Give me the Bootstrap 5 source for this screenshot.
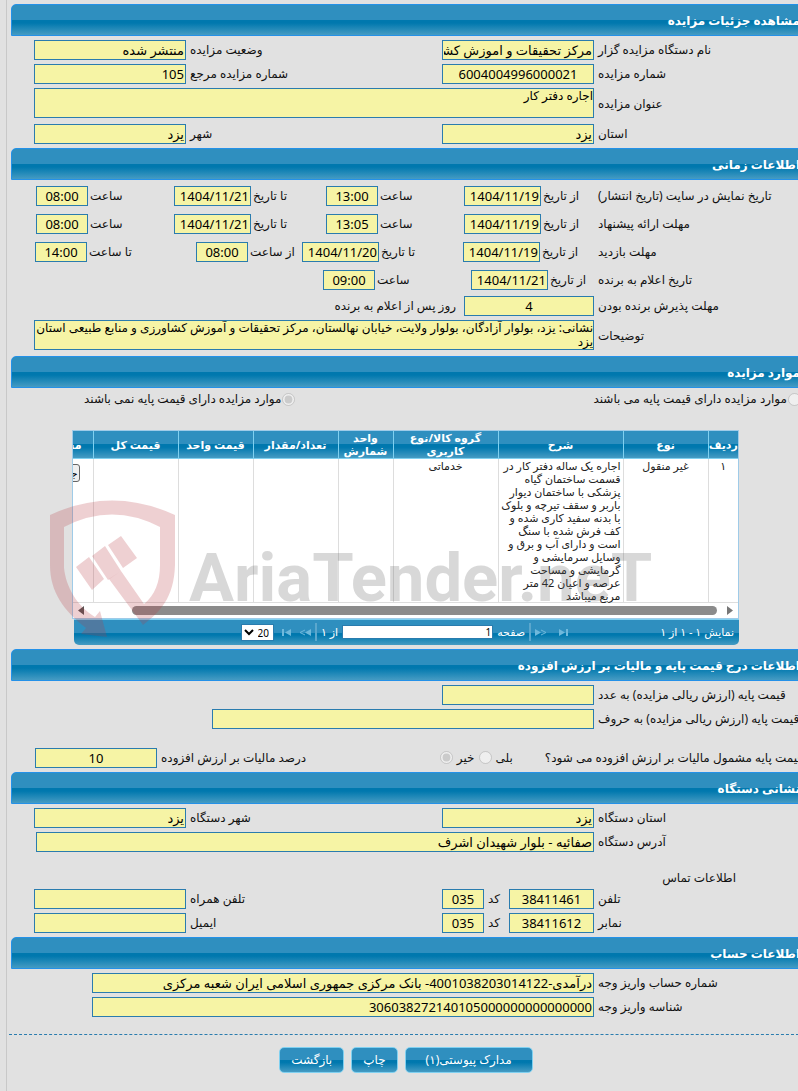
<!DOCTYPE html>
<html lang="fa" dir="rtl">
<head>
<meta charset="utf-8">
<meta name="viewport" content="width=device-width, initial-scale=1">
<title>مشاهده جزئیات مزایده</title>
<link href="https://cdn.jsdelivr.net/npm/bootstrap@5.3.0/dist/css/bootstrap.min.css" rel="stylesheet">
<style>
  :root {
    --edge: #2491e8;
    --cell: #7fd0f0;
    --bar: linear-gradient(#2f8fbf 0 50%, #0078ae 50% 60%, #459bc3 100%);
  }
  body {
    background: #e1e1e1; color: #111; overflow-x: hidden;
    font-family: "Noto Sans", "DejaVu Sans", sans-serif; font-size: 12px; line-height: 14px;
  }
  .page-main { margin: 0 -6px 0 6px; padding: 4px 0 18px 4px; border-left: 1px solid #c8c8c8; }
  .bar-title {
    height: 32px; margin: 0; padding: 0 3px; font-size: 12px; line-height: 31px; font-weight: 700; color: #fff;
    background: var(--bar); border: 1px solid var(--edge); border-radius: 5px 5px 0 0;
  }
  .rows { display: grid; gap: 4px; padding: 4px 0 4px 23px; }
  .rows.times { row-gap: 8px; padding: 6px 0 6px 23px; }
  .line { display: grid; grid-template-columns: 210px minmax(0, 1fr); align-items: center; }
  .line > label, .line > .cap { text-align: left; padding-left: 4px; white-space: nowrap; justify-self: end; }
  .duo { display: grid; grid-template-columns: 152px minmax(0, 1fr) 152px; align-items: center; }
  .duo > label { text-align: left; padding-left: 4px; }
  .t4 { display: grid; grid-template-columns: 130fr 138fr 152fr 138fr; padding-left: 2px; }
  .t4.visit { grid-template-columns: 131fr 161fr 106fr 161fr; padding-left: 1px; }
  .t4.winner { grid-template-columns: 123fr 148fr 289fr; padding-left: 0; }
  .pair { display: flex; align-items: center; justify-content: flex-end; gap: 2px; white-space: nowrap; }
  .fld {
    display: block; height: 20px; width: 100%; padding: 0 1px; border: 1px solid #2a7cae; border-radius: 0;
    background: #f6f4a5; color: #000; font-size: 13px; line-height: 18px;
  }
  textarea.fld { height: 30px; margin-bottom: 2px; padding: 0; font-size: 12px; line-height: 14px; resize: none; overflow: hidden; }
  .fld.date { width: 77px; }
  .fld.hour { width: 52px; text-align: center; }
  .fld.mid { text-align: center; }
  .days-box { width: 130px; }
  .words-box { padding-left: 178px; }
  .acc-box { padding-left: 58px; }
  .addr-box { padding-left: 2px; }
  .pct-box { width: 122px; }
  .phone { display: grid; grid-template-columns: 85px 1fr 42px; align-items: center; }
  .phone label { text-align: left; padding-left: 4px; }
  input[type=radio] { width: 13px; height: 13px; margin: 0; flex: none; }
  .choice-row { height: 22px; margin-bottom: 20px; padding-right: 3px; white-space: nowrap; }
  .choice-row > div { gap: 1px; }
  .choice-first { flex: 0 0 64%; }
  .vat-row { margin-top: 15px; padding: 0 1px; gap: 4px; white-space: nowrap; }
  .vat-q { padding-left: 28px; }
  .vat-pct { margin-right: auto; }
  .contact-title { height: 29px; margin: 0; padding: 15px 68px 0 0; font-size: 12px; line-height: 14px; font-weight: 400; }
  .grid-box { position: relative; margin: 0 65px 0 61px; }
  .grid-view { overflow: hidden; background: #fff; border: 1px solid #9fcbe8; border-bottom: 0; font-size: 11px; }
  .grid-view table { table-layout: fixed; width: 731px; margin: 0; border-collapse: collapse; }
  .grid-view th { height: 27px; padding: 0; background: var(--bar); color: #fff; text-align: center; vertical-align: middle; line-height: 13px; border-left: 1px solid var(--cell); border-bottom: 1px solid var(--cell); }
  .grid-view td { padding: 0 2px; line-height: 13px; text-align: center; vertical-align: top; color: #222; border-left: 1px solid #ddd; border-bottom: 1px solid #ddd; }
  .grid-view td.desc { text-align: right; }
  .grid-view .docs { text-align: right; padding-right: 11px; }
  .grid-view td.docs { padding-right: 13px; }
  .grid-view button { margin-top: 5px; border: 1px solid #666; border-radius: 3px; background: #efefef; padding: 0 1px; height: 18px; font-size: 11px; }
  .scroll-strip { display: flex; align-items: center; gap: 10px; height: 16px; padding: 0 5px; background: #fff; border: 1px solid #9fcbe8; border-top: 0; }
  .scroll-thumb { flex: 1; height: 9px; margin-left: 38px; border-radius: 5px; background: #8b8b8b; }
  .pager { display: flex; align-items: center; height: 26px; margin-left: 2px; padding: 0 5px; color: #fff; background: var(--bar); border-top: 1px solid var(--cell); border-radius: 0 0 5px 5px; white-space: nowrap; font-size: 11px; }
  .pager-mid { gap: 4px; margin-left: 162px; }
  .pager input { width: 151px; height: 14px; border: 1px solid #2a7cae; padding: 0 1px; font-size: 10px; line-height: 12px; }
  .pager select { width: 33px; height: 17px; border: 1px solid #2a7cae; background: #fff; padding: 0; font-size: 10px; }
  .pager .sep { width: 2px; height: 18px; background: #5ba7cd; }
  .pager svg, .scroll-strip svg { display: block; flex: none; }
  .stamp { position: absolute; left: -23px; top: 69px; pointer-events: none; direction: ltr; }
  .stamp span { position: absolute; left: 140px; top: 29px; font: 700 67px/100px Roboto, sans-serif; color: rgba(90,90,90,.24); white-space: nowrap; }
  .after-grid { margin-top: 4px; }
  .dash { margin: 13px 0 12px -2px; border-top: 1px dashed #2a7cae; }
  .acts { gap: 7px; padding-right: 3px; }
  .act { height: 26px; padding: 0 11px; border: 1px solid var(--cell); border-radius: 5px; background: var(--bar); color: #fff; font-size: 12px; }
  .act.wide { padding: 0 20px; }
</style>
<script src="https://cdn.jsdelivr.net/npm/bootstrap@5.3.0/dist/js/bootstrap.bundle.min.js"></script>
</head>
<body>
<main class="page-main">
  <section>
    <h2 class="bar-title">مشاهده جزئیات مزایده</h2>
    <div class="rows">
      <div class="line"><label for="org">نام دستگاه مزایده گزار</label>
        <div class="duo"><input class="fld" id="org" readonly value="مرکز تحقیقات و اموزش کشاورزی"><label for="state">وضعیت مزایده</label><input class="fld" id="state" readonly value="منتشر شده"></div></div>
      <div class="line"><label for="num">شماره مزایده</label>
        <div class="duo"><input class="fld mid" id="num" readonly value="6004004996000021"><label for="ref">شماره مزایده مرجع</label><input class="fld" id="ref" readonly value="105"></div></div>
      <div class="line"><label for="subj">عنوان مزایده</label><textarea class="fld" id="subj" readonly>اجاره دفتر کار</textarea></div>
      <div class="line"><label for="prov">استان</label>
        <div class="duo"><input class="fld" id="prov" readonly value="یزد"><label for="city">شهر</label><input class="fld" id="city" readonly value="یزد"></div></div>
    </div>
  </section>

  <section>
    <h2 class="bar-title">اطلاعات زمانی</h2>
    <div class="rows times">
      <div class="line"><span class="cap">تاریخ نمایش در سایت (تاریخ انتشار)</span>
        <div class="t4">
          <div class="pair"><label for="a1">از تاریخ</label><input class="fld date" id="a1" readonly value="1404/11/19"></div>
          <div class="pair"><label for="a2">ساعت</label><input class="fld hour" id="a2" readonly value="13:00"></div>
          <div class="pair"><label for="a3">تا تاریخ</label><input class="fld date" id="a3" readonly value="1404/11/21"></div>
          <div class="pair"><label for="a4">ساعت</label><input class="fld hour" id="a4" readonly value="08:00"></div>
        </div></div>
      <div class="line"><span class="cap">مهلت ارائه پیشنهاد</span>
        <div class="t4">
          <div class="pair"><label for="b1">از تاریخ</label><input class="fld date" id="b1" readonly value="1404/11/19"></div>
          <div class="pair"><label for="b2">ساعت</label><input class="fld hour" id="b2" readonly value="13:05"></div>
          <div class="pair"><label for="b3">تا تاریخ</label><input class="fld date" id="b3" readonly value="1404/11/21"></div>
          <div class="pair"><label for="b4">ساعت</label><input class="fld hour" id="b4" readonly value="08:00"></div>
        </div></div>
      <div class="line"><span class="cap">مهلت بازدید</span>
        <div class="t4 visit">
          <div class="pair"><label for="c1">از تاریخ</label><input class="fld date" id="c1" readonly value="1404/11/19"></div>
          <div class="pair"><label for="c2">تا تاریخ</label><input class="fld date" id="c2" readonly value="1404/11/20"></div>
          <div class="pair"><label for="c3">از ساعت</label><input class="fld hour" id="c3" readonly value="08:00"></div>
          <div class="pair"><label for="c4">تا ساعت</label><input class="fld hour" id="c4" readonly value="14:00"></div>
        </div></div>
      <div class="line"><span class="cap">تاریخ اعلام به برنده</span>
        <div class="t4 winner">
          <div class="pair"><label for="d1">از تاریخ</label><input class="fld date" id="d1" readonly value="1404/11/21"></div>
          <div class="pair"><label for="d2">ساعت</label><input class="fld hour" id="d2" readonly value="09:00"></div>
        </div></div>
    </div>
    <div class="rows pt-0">
      <div class="line"><label for="days">مهلت پذیرش برنده بودن</label>
        <div class="d-flex align-items-center gap-2"><div class="days-box"><input class="fld mid" id="days" readonly value="4"></div><span>روز پس از اعلام به برنده</span></div></div>
      <div class="line"><label for="note">توضیحات</label><textarea class="fld" id="note" readonly>نشانی: یزد، بولوار آزادگان، بولوار ولایت، خیابان نهالستان، مرکز تحقیقات و آموزش کشاورزی و منابع طبیعی استان یزد</textarea></div>
    </div>
  </section>

  <section>
    <h2 class="bar-title">موارد مزایده</h2>
    <div class="choice-row d-flex">
      <div class="choice-first d-flex align-items-center"><input type="radio" name="base" id="r1" disabled><label for="r1">موارد مزایده دارای قیمت پایه می باشند</label></div>
      <div class="d-flex align-items-center"><input type="radio" name="base" id="r2" checked disabled><label for="r2">موارد مزایده دارای قیمت پایه نمی باشند</label></div>
    </div>
    <div class="grid-box">
      <div class="grid-view">
        <table>
          <colgroup><col style="width:30px"><col style="width:85px"><col style="width:125px"><col style="width:105px"><col style="width:55px"><col style="width:85px"><col style="width:75px"><col style="width:85px"><col style="width:86px"></colgroup>
          <thead><tr><th>ردیف</th><th>نوع</th><th>شرح</th><th>گروه کالا/نوع کاربری</th><th>واحد شمارش</th><th>تعداد/مقدار</th><th>قیمت واحد</th><th>قیمت کل</th><th class="docs">مستندات</th></tr></thead>
          <tbody><tr><td>۱</td><td>غیر منقول</td><td class="desc">اجاره یک ساله دفتر کار در قسمت ساختمان گیاه پزشکی با ساختمان دیوار باربر و سقف تیرچه و بلوک با بدنه سفید کاری شده و کف فرش شده با سنگ است و دارای آب و برق و وسایل سرمایشی و گرمایشی و مساحت عرصه و اعیان 42 متر مربع میباشد</td><td>خدماتی</td><td></td><td></td><td></td><td></td><td class="docs"><button type="button">جزئیات</button></td></tr></tbody>
        </table>
      </div>
      <div class="scroll-strip">
        <svg width="6" height="9"><path d="M0 0L6 4.500L0 9Z" fill="#777"/></svg>
        <div class="scroll-thumb"></div>
        <svg width="6" height="9"><path d="M6 0L0 4.500L6 9Z" fill="#555"/></svg>
      </div>
      <div class="pager">
        <span class="flex-grow-1">نمایش ۱ - ۱ از ۱</span>
        <div class="pager-mid d-flex align-items-center">
          <svg class="ms-1" width="9" height="7"><path d="M0 0L6 3.500L0 7ZM7 0h2v7h-2z" fill="#6fb9dc"/></svg>
          <svg class="me-1" width="12" height="7"><path d="M0 0L6 3.500L0 7Z" fill="#6fb9dc"/><path d="M6 1L11 3.500L6 6" fill="none" stroke="#6fb9dc"/></svg>
          <span class="sep"></span>
          <label for="pg">صفحه</label><input id="pg" value="1"><span>از ۱</span>
          <span class="sep"></span>
          <svg width="12" height="7"><path d="M12 0L6 3.500L12 7Z" fill="#6fb9dc"/><path d="M6 1L1 3.500L6 6" fill="none" stroke="#6fb9dc"/></svg>
          <svg class="mx-1" width="9" height="7"><path d="M9 0L3 3.500L9 7ZM0 0h2v7h-2z" fill="#6fb9dc"/></svg>
          <select aria-label="تعداد در صفحه"><option>20</option></select>
        </div>
      </div>
      <div class="stamp">
        <svg width="130" height="140" viewBox="49 499 130 140"><g fill="#b83a42" fill-opacity=".24"><path d="M50 515Q112 486 175 515V565C174 598 160 612 143 625L109 579L121 571L144 604C155 595 160 582 160 565V527Q112 502 64 527V568C66 587 77 606 95 617L100 611L107 637L81 634L86 628C64 611 50 592 50 565Z"/><path d="M76 567L89 557L104 579L92 590ZM92 556L105 546L121 571L108 580ZM108 545L121 536L137 558L123 568Z"/></g></svg>
        <span>AriaTender.neT</span>
      </div>
    </div>
  </section>

  <section class="after-grid">
    <h2 class="bar-title">اطلاعات درج قیمت پایه و مالیات بر ارزش افزوده</h2>
    <div class="rows">
      <div class="line"><label for="p1">قیمت پایه (ارزش ریالی مزایده) به عدد</label><div class="duo"><input class="fld" id="p1" readonly></div></div>
      <div class="line"><label for="p2">قیمت پایه (ارزش ریالی مزایده) به حروف</label><div class="words-box"><input class="fld" id="p2" readonly></div></div>
      <div class="vat-row d-flex align-items-center">
        <span class="vat-q">قیمت پایه مشمول مالیات بر ارزش افزوده می شود؟</span>
        <label for="y">بلی</label><input type="radio" name="vat" id="y" disabled>
        <label for="n">خیر</label><input type="radio" name="vat" id="n" checked disabled>
        <label class="vat-pct" for="pct">درصد مالیات بر ارزش افزوده</label><div class="pct-box"><input class="fld mid" id="pct" readonly value="10"></div>
      </div>
    </div>
  </section>

  <section>
    <h2 class="bar-title">نشانی دستگاه</h2>
    <div class="rows">
      <div class="line"><label for="op">استان دستگاه</label>
        <div class="duo"><input class="fld" id="op" readonly value="یزد"><label for="oc">شهر دستگاه</label><input class="fld" id="oc" readonly value="یزد"></div></div>
      <div class="line"><label for="oa">آدرس دستگاه</label><div class="addr-box"><input class="fld" id="oa" readonly value="صفائیه - بلوار شهیدان اشرف"></div></div>
      <h3 class="contact-title">اطلاعات تماس</h3>
      <div class="line"><label for="tel">تلفن</label>
        <div class="duo"><div class="phone"><input class="fld mid" id="tel" readonly value="38411461"><label for="tc">کد</label><input class="fld mid" id="tc" readonly value="035"></div><label for="mob">تلفن همراه</label><input class="fld" id="mob" readonly></div></div>
      <div class="line"><label for="fax">نمابر</label>
        <div class="duo"><div class="phone"><input class="fld mid" id="fax" readonly value="38411612"><label for="fc">کد</label><input class="fld mid" id="fc" readonly value="035"></div><label for="mail">ایمیل</label><input class="fld" id="mail" readonly></div></div>
    </div>
  </section>

  <section>
    <h2 class="bar-title">اطلاعات حساب</h2>
    <div class="rows">
      <div class="line"><label for="acc">شماره حساب واریز وجه</label><div class="acc-box"><input class="fld" id="acc" readonly value="درآمدی-4001038203014122- بانک مرکزی جمهوری اسلامی ایران شعبه مرکزی"></div></div>
      <div class="line"><label for="pid">شناسه واریز وجه</label><div class="acc-box"><input class="fld" id="pid" readonly value="306038272140105000000000000000"></div></div>
    </div>
  </section>

  <div class="dash"></div>
  <div class="acts d-flex justify-content-center">
    <button class="act wide" type="button">مدارک پیوستی(۱)</button>
    <button class="act" type="button">چاپ</button>
    <button class="act" type="button">بازگشت</button>
  </div>
</main>
</body>
</html>
